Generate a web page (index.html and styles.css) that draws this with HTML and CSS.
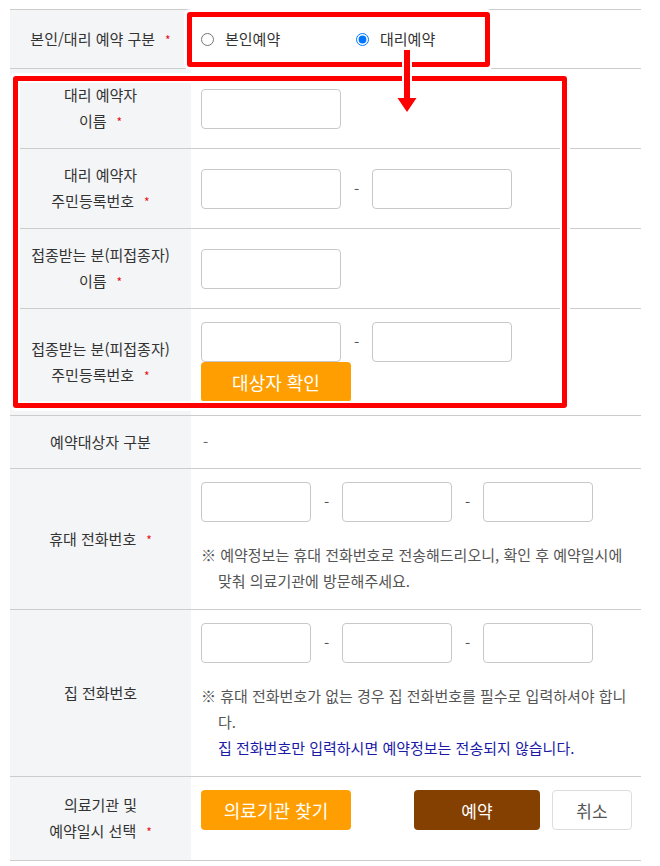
FILE: index.html
```html
<!DOCTYPE html>
<html lang="ko">
<head>
    <meta charset="UTF-8">
    <meta name="viewport" content="width=device-width, initial-scale=1.0">
    <title>예약 정보 입력</title>
    <link rel="stylesheet" href="styles.css">
</head>
<body>
    <div class="form-wrap">
        <table class="form-table">
            <colgroup>
                <col class="col-label">
                <col>
            </colgroup>
            <tbody>
                <tr>
                    <th>본인/대리 예약 구분<span class="req">*</span></th>
                    <td>
                        <div class="radio-group">
                            <label class="radio"><input type="radio" name="resv-type">본인예약</label>
                            <label class="radio"><input type="radio" name="resv-type" checked>대리예약</label>
                        </div>
                    </td>
                </tr>
                <tr>
                    <th>대리 예약자<br>이름<span class="req">*</span></th>
                    <td><input type="text" class="field"></td>
                </tr>
                <tr>
                    <th>대리 예약자<br>주민등록번호<span class="req">*</span></th>
                    <td>
                        <div class="input-group">
                            <input type="text" class="field">
                            <span class="dash">-</span>
                            <input type="password" class="field">
                        </div>
                    </td>
                </tr>
                <tr>
                    <th>접종받는 분(피접종자)<br>이름<span class="req">*</span></th>
                    <td><input type="text" class="field"></td>
                </tr>
                <tr>
                    <th>접종받는 분(피접종자)<br>주민등록번호<span class="req">*</span></th>
                    <td>
                        <div class="input-group">
                            <input type="text" class="field">
                            <span class="dash">-</span>
                            <input type="password" class="field">
                        </div>
                        <button class="btn btn-orange">대상자 확인</button>
                    </td>
                </tr>
                <tr>
                    <th>예약대상자 구분</th>
                    <td><span class="empty-value">-</span></td>
                </tr>
                <tr>
                    <th>휴대 전화번호<span class="req">*</span></th>
                    <td class="cell-note">
                        <div class="input-group">
                            <input type="text" class="field field-sm">
                            <span class="dash">-</span>
                            <input type="text" class="field field-sm">
                            <span class="dash">-</span>
                            <input type="text" class="field field-sm">
                        </div>
                        <p class="note">※ 예약정보는 휴대 전화번호로 전송해드리오니, 확인 후 예약일시에 맞춰 의료기관에 방문해주세요.</p>
                    </td>
                </tr>
                <tr>
                    <th>집 전화번호</th>
                    <td class="cell-note">
                        <div class="input-group">
                            <input type="text" class="field field-sm">
                            <span class="dash">-</span>
                            <input type="text" class="field field-sm">
                            <span class="dash">-</span>
                            <input type="text" class="field field-sm">
                        </div>
                        <p class="note">※ 휴대 전화번호가 없는 경우 집 전화번호를 필수로 입력하셔야 합니다.</p>
                        <p class="note-blue">집 전화번호만 입력하시면 예약정보는 전송되지 않습니다.</p>
                    </td>
                </tr>
                <tr class="row-last">
                    <th>의료기관 및<br>예약일시 선택<span class="req">*</span></th>
                    <td>
                        <div class="btn-row">
                            <button class="btn btn-orange">의료기관 찾기</button>
                            <div class="btn-group">
                                <button class="btn btn-reserve">예약</button>
                                <button class="btn btn-cancel">취소</button>
                            </div>
                        </div>
                    </td>
                </tr>
            </tbody>
        </table>

        <!-- annotation marks -->
        <div class="mark mark-radio"></div>
        <div class="mark mark-proxy"></div>
        <svg class="mark-arrow" width="24" height="68" viewBox="0 0 24 68">
            <polygon points="9,2 15,2 15,50 21.5,50 12,64 2.5,50 9,50" fill="#ff0000" stroke="#ffffff" stroke-width="4" paint-order="stroke" stroke-linejoin="miter"/>
        </svg>
    </div>
</body>
</html>
```

FILE: styles.css
```css
body {
    margin: 0;
    font-family: "Noto Sans CJK KR", "Noto Sans", sans-serif;
    font-size: 15px;
    color: #333;
    background-color: #fff;
}

.form-wrap {
    position: relative;
    padding: 9px 0 0 10px;
}

.form-table {
    width: 631px;
    border-collapse: collapse;
    table-layout: fixed;
    border-top: 1px solid #cccccc;
}

.col-label {
    width: 181px;
}

.form-table th,
.form-table td {
    border-bottom: 1px solid #cccccc;
    line-height: 26px;
    vertical-align: middle;
}

.form-table th {
    padding: 13px 0;
    background-color: #f4f5f7;
    font-weight: normal;
    text-align: center;
    color: #333;
}

.form-table td {
    padding: 13px 9px 13px 10px;
    text-align: left;
}

.req {
    margin-left: 10px;
    color: #e8101a;
    font-size: 12px;
}

.radio-group {
    display: flex;
    align-items: center;
    height: 32px;
}

.radio {
    display: inline-flex;
    align-items: center;
    gap: 11px;
    width: 155px;
    line-height: 32px;
    cursor: pointer;
}

.radio input {
    width: 13px;
    height: 13px;
    margin: 0;
}

.field {
    display: block;
    width: 140px;
    height: 40px;
    box-sizing: border-box;
    margin: 0;
    padding: 0 10px;
    border: 1px solid #c8c8c8;
    border-radius: 4px;
    background-color: #fff;
    font-family: inherit;
    font-size: 14px;
}

.field-sm {
    width: 110px;
}

.input-group {
    display: flex;
    align-items: center;
}

.dash {
    width: 31px;
    text-align: center;
    color: #555;
}

.empty-value {
    padding-left: 2px;
    color: #666;
}

.btn {
    display: block;
    height: 40px;
    border: 0;
    border-radius: 4px;
    font-family: inherit;
    font-size: 18px;
    color: #fff;
    cursor: pointer;
}

.btn-orange {
    width: 150px;
    background-color: #ff9e00;
}

.btn-reserve {
    width: 126px;
    background-color: #844000;
    font-size: 17px;
}

.btn-cancel {
    width: 80px;
    background-color: #fff;
    border: 1px solid #dddddd;
    color: #555;
    font-size: 17px;
}

.btn-row {
    display: flex;
    justify-content: space-between;
}

.btn-group {
    display: flex;
    gap: 12px;
}

.cell-note {
    padding-bottom: 15px !important;
}

.note {
    margin: 20px 0 0;
    padding-left: 17px;
    text-indent: -17px;
    color: #555;
}

.note-blue {
    margin: 0;
    padding-left: 17px;
    color: #1a1aa6;
}

.row-last th {
    padding: 15px 0;
}

.row-last td {
    vertical-align: top;
}

/* red annotation boxes drawn over the form */
.mark {
    position: absolute;
    border: 5px solid #ff0000;
    border-radius: 3px;
    box-shadow: 0 0 0 3px #fff, inset 0 0 0 2px #fff;
    pointer-events: none;
}

.mark-radio {
    left: 187px;
    top: 12px;
    width: 293px;
    height: 45px;
}

.mark-proxy {
    left: 13px;
    top: 76px;
    width: 544px;
    height: 322px;
}

.mark-arrow {
    position: absolute;
    left: 395px;
    top: 48px;
}
```
